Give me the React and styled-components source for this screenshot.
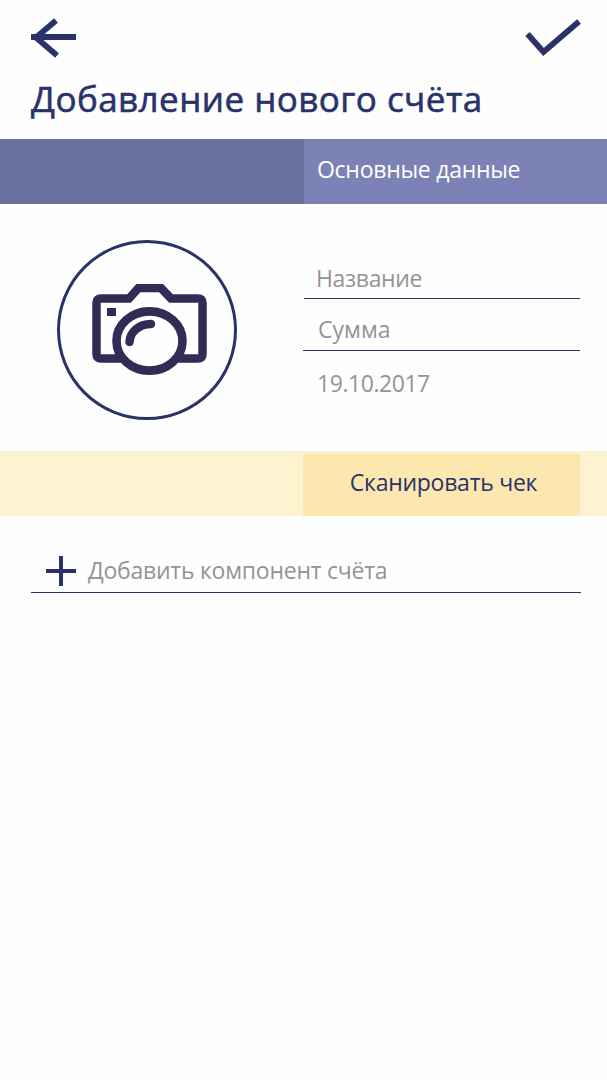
import React from "react";
import styled, { createGlobalStyle } from "styled-components";

const navy = "#29336a";

const GlobalStyle = createGlobalStyle`
  * { box-sizing: border-box; }
  body { margin: 0; background: #fefefe; font-family: "Open Sans", "Noto Sans", sans-serif; }
  button { font: inherit; border: 0; padding: 0; background: none; color: inherit; cursor: pointer; }
`;

const Screen = styled.main`
  min-height: 1080px;
  color: ${navy};
`;

const Header = styled.header`
  display: flex;
  justify-content: space-between;
  height: 77px;
  padding: 17px 25px 0 30px;
`;

const IconButton = styled.button`
  display: block;
  height: 42px;
  svg { display: block; }
`;

const Title = styled.h1`
  margin: 0 0 18px;
  padding-left: 31px;
  font-size: 35px;
  line-height: 44px;
  font-weight: 400;
  letter-spacing: 0.45px;
  -webkit-text-stroke: 0.6px ${navy};
  white-space: nowrap;
`;

const TabBar = styled.div`
  display: flex;
  height: 65px;
  background: #69709d;
`;

const Tab = styled.div`
  margin-left: 304px;
  flex: 1;
  padding: 0 0 4px 13px;
  background: #7c82b6;
  color: #fff;
  font-size: 23px;
  line-height: 61px;
  letter-spacing: -0.27px;
  white-space: nowrap;
`;

const Details = styled.section`
  display: flex;
  justify-content: space-between;
  height: 247px;
  padding: 36px 27px 0 57px;
`;

const Photo = styled.button`
  display: flex;
  align-items: center;
  justify-content: center;
  width: 180px;
  height: 180px;
  && { border: 3px solid ${navy}; }
  border-radius: 50%;
  svg { display: block; margin: 0 0 2px 5px; }
`;

const Fields = styled.div`
  display: flex;
  flex-direction: column;
  align-items: flex-end;
  width: 277px;
  padding-top: 23px;
`;

const Field = styled.div`
  width: ${(p) => p.$width}px;
  height: ${(p) => p.$height}px;
  margin-bottom: ${(p) => p.$gap || 0}px;
  padding-left: ${(p) => p.$inset}px;
  border-bottom: ${(p) => (p.$plain ? "0" : `1px solid ${navy}`)};
  color: #949494;
  font-size: 23px;
  line-height: 30px;
  letter-spacing: ${(p) => p.$tracking || 0}px;
  white-space: nowrap;
`;

const ScanBar = styled.div`
  display: flex;
  justify-content: flex-end;
  height: 65px;
  padding: 3px 27px 0 0;
  background: #fef3d0;
`;

const ScanButton = styled.button`
  && {
    width: 277px;
    padding: 0 0 6px 4px;
    background: #fce7ae;
    font-size: 23px;
    letter-spacing: -0.27px;
    white-space: nowrap;
  }
`;

const AddRow = styled.div`
  display: flex;
  align-items: flex-start;
  gap: 12px;
  height: 38px;
  margin: 39px 26px 0 31px;
  padding-left: 15px;
  border-bottom: 1px solid ${navy};
  color: #949494;
  font-size: 23px;
  line-height: 30px;
  letter-spacing: -0.25px;
  white-space: nowrap;
  svg { display: block; margin-top: 1px; }
`;

const BackIcon = () => (
  <svg width="48" height="42" viewBox="0 0 48 42" fill="none" stroke={navy}>
    <path d="M1 20H46" strokeWidth="6" />
    <path d="M26 3.500L6 20.500L27 38.500" strokeWidth="5.800" />
  </svg>
);

const CheckIcon = () => (
  <svg width="57" height="42" viewBox="0 0 57 42" fill="none" stroke={navy}>
    <path d="M2.500 17L18.500 35L54 4.500" strokeWidth="5.800" />
  </svg>
);

const CameraIcon = () => (
  <svg width="115" height="91" viewBox="0 0 115 91" fill="none" stroke="#302c56">
    <path d="M32 74.500H9Q4.500 74.500 4.500 70V19Q4.500 14.500 9 14.500H37L46.500 4H69L79 14.500H106Q110.500 14.500 110.500 19V70Q110.500 74.500 106 74.500H83" strokeWidth="8.500" />
    <ellipse cx="57.500" cy="57" rx="33" ry="29.600" strokeWidth="8.600" />
    <path d="M37.500 58C38 48 47 40 59 40" strokeWidth="8.500" strokeLinecap="round" />
    <path d="M15 24H24V32H15Z" fill="#302c56" stroke="none" />
  </svg>
);

const PlusIcon = () => (
  <svg width="30" height="30" viewBox="0 0 30 30" stroke={navy} strokeWidth="4">
    <path d="M0 15H30M15 0V30" />
  </svg>
);

export default function App() {
  return (
    <Screen>
      <GlobalStyle />
      <Header>
        <IconButton aria-label="Назад"><BackIcon /></IconButton>
        <IconButton aria-label="Готово"><CheckIcon /></IconButton>
      </Header>
      <Title>Добавление нового счёта</Title>
      <TabBar>
        <Tab>Основные данные</Tab>
      </TabBar>
      <Details>
        <Photo aria-label="Фото"><CameraIcon /></Photo>
        <Fields>
          <Field $width={276} $height={36} $gap={15} $inset={12} $tracking={-0.35}>Название</Field>
          <Field $width={277} $height={37} $gap={17} $inset={15}>Сумма</Field>
          <Field $width={277} $height={30} $inset={14} $tracking={-0.45} $plain>19.10.2017</Field>
        </Fields>
      </Details>
      <ScanBar>
        <ScanButton>Сканировать чек</ScanButton>
      </ScanBar>
      <AddRow>
        <PlusIcon />
        <span>Добавить компонент счёта</span>
      </AddRow>
    </Screen>
  );
}
